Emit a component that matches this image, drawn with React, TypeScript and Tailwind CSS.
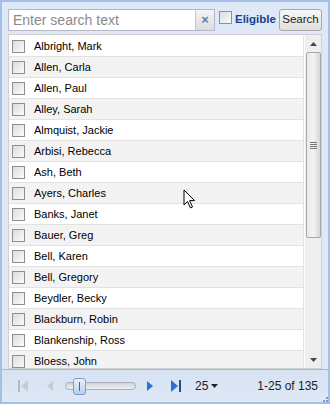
import React from "react";

const names = [
  "Albright, Mark",
  "Allen, Carla",
  "Allen, Paul",
  "Alley, Sarah",
  "Almquist, Jackie",
  "Arbisi, Rebecca",
  "Ash, Beth",
  "Ayers, Charles",
  "Banks, Janet",
  "Bauer, Greg",
  "Bell, Karen",
  "Bell, Gregory",
  "Beydler, Becky",
  "Blackburn, Robin",
  "Blankenship, Ross",
  "Bloess, John",
];

function Check() {
  return (
    <div className="w-[13px] h-[13px] border border-[#8f8f8f] bg-gradient-to-br from-[#dcdcdc] to-[#fbfbfb] shrink-0" />
  );
}

export default function App() {
  return (
    <div
      className="relative w-[330px] h-[404px] bg-[#dfe8f6] border-2 border-[#a4c0e6] flex flex-col overflow-hidden"
      style={{ fontFamily: '"Liberation Sans", Arial, sans-serif' }}
    >
      {/* toolbar */}
      <div className="flex items-center px-[6px] pt-[7px] h-[29px]">
        <div className="flex w-[207px] h-[22px] border border-[#b5b8c8] bg-white">
          <div className="flex-1 flex items-center pl-[4px] text-[14px] text-[#8a8a8a]">
            Enter search text
          </div>
          <div className="w-[19px] h-full bg-gradient-to-b from-[#f5f5f5] to-[#dcdcdc] border-l border-[#c8c8c8] flex items-center justify-center text-[#5a7fb0] text-[13px] font-bold">
            ×
          </div>
        </div>
        <div className="ml-[4px] w-[13px] h-[13px] -mt-[6px] border border-[#8f8f8f] bg-gradient-to-br from-[#dcdcdc] to-[#fbfbfb]" />
        <div className="ml-[3px] text-[11.5px] font-bold text-[#15428b]">Eligible</div>
        <div className="ml-auto w-[43px] h-[22px] border border-[#a8a8a8] rounded-[3px] bg-gradient-to-b from-[#f7f7f7] to-[#dedede] flex items-center justify-center text-[11.5px] text-[#222]">
          Search
        </div>
      </div>

      {/* list */}
      <div className="mx-[6px] mt-[3px] h-[335px] bg-white flex border border-[#d0d0d0]">
        <div className="flex-1 overflow-hidden pt-[1px]">
          {names.map((n, i) => (
            <div
              key={n}
              className={`h-[21px] flex items-center pl-[3px] border-b border-r border-[#e2e2e2] ${
                i % 2 === 0 ? "bg-white" : "bg-[#f3f3f3]"
              }`}
            >
              <Check />
              <span className="ml-[9px] text-[11px] text-black">{n}</span>
            </div>
          ))}
        </div>
        {/* scrollbar */}
        <div className="w-[16px] ml-[1px] bg-[#eeeeee] flex flex-col items-center">
          <div className="h-[17px] flex items-center justify-center">
            <svg width="7" height="4" viewBox="0 0 7 4">
              <path d="M3.5 0 L7 4 L0 4 Z" fill="#444" />
            </svg>
          </div>
          <div className="w-[15px] h-[186px] border border-[#a8a8a8] rounded-[2px] bg-gradient-to-r from-[#e8e8e8] via-[#f4f4f4] to-[#d6d6d6] flex items-center justify-center">
            <div className="flex flex-col gap-[1px]">
              <div className="w-[7px] h-[1px] bg-[#777]" />
              <div className="w-[7px] h-[1px] bg-[#777]" />
              <div className="w-[7px] h-[1px] bg-[#777]" />
              <div className="w-[7px] h-[1px] bg-[#777]" />
            </div>
          </div>
          <div className="flex-1" />
          <div className="h-[17px] flex items-center justify-center">
            <svg width="7" height="4" viewBox="0 0 7 4">
              <path d="M0 0 L7 0 L3.5 4 Z" fill="#444" />
            </svg>
          </div>
        </div>
      </div>

      {/* paging bar */}
      <div className="flex-1 border-t border-[#99bbe8] bg-gradient-to-b from-[#d6e3f2] to-[#dfe8f6] flex items-center px-[6px] text-[12px]">
        <svg width="12" height="14" viewBox="0 0 12 14" className="ml-[9px]">
          <rect x="1" y="1" width="2" height="12" fill="#b0b8c4" />
          <path d="M11 1 L4 7 L11 13 Z" fill="#c4ccd8" />
        </svg>
        <svg width="8" height="14" viewBox="0 0 8 14" className="ml-[17px]">
          <path d="M7 2 L1 7 L7 12 Z" fill="#c4ccd8" />
        </svg>
        <div className="relative ml-[11px] w-[71px] h-[8px] rounded-full border border-[#a8b0bc] bg-gradient-to-b from-[#cfd4da] to-[#eef0f2]">
          <div className="absolute left-[7px] -top-[5px] w-[13px] h-[17px] rounded-[3px] border border-[#7b9cc8] bg-gradient-to-b from-[#e6f0fb] to-[#b8d0ee] flex items-center justify-center">
            <div className="w-[1px] h-[9px] bg-[#3d6aa8]" />
          </div>
        </div>
        <svg width="8" height="14" viewBox="0 0 8 14" className="ml-[10px]">
          <path d="M1 2 L7 7 L1 12 Z" fill="#2a72d0" />
        </svg>
        <svg width="12" height="14" viewBox="0 0 12 14" className="ml-[16px]">
          <path d="M1 1 L8 7 L1 13 Z" fill="#2a72d0" />
          <rect x="9" y="1" width="2" height="12" fill="#1d4f94" />
        </svg>
        <div className="ml-[13px] flex items-center text-[#222]">
          <span className="text-[12px]">25</span>
          <svg width="7" height="4" viewBox="0 0 7 4" className="ml-[3px]">
            <path d="M0 0 L7 0 L3.5 4 Z" fill="#222" />
          </svg>
        </div>
        <div className="ml-auto mr-[4px] text-[12px] text-[#222]">1-25 of 135</div>
      </div>

      {/* resize grip */}
      <div className="absolute right-[0px] bottom-[0px] w-[5px] h-[5px] grid grid-cols-2 gap-[1px]">
        <div />
        <div className="bg-[#7a9cd0]" />
        <div className="bg-[#7a9cd0]" />
        <div className="bg-[#7a9cd0]" />
      </div>

      {/* mouse cursor */}
      <svg
        className="absolute left-[181px] top-[187px]"
        width="14"
        height="22"
        viewBox="0 0 14 22"
      >
        <path
          d="M1 1 L1 16 L4.5 12.5 L7.5 19 L9.5 18 L6.6 11.6 L11.5 11.6 Z"
          fill="white"
          stroke="black"
          strokeWidth="1"
          strokeLinejoin="miter"
        />
      </svg>
    </div>
  );
}
